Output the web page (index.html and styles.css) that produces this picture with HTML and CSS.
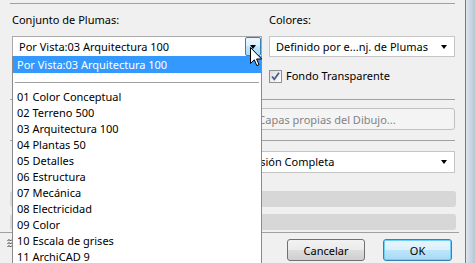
FILE: index.html
```html
<!DOCTYPE html>
<html lang="es">
<head>
  <meta charset="UTF-8" />
  <title>Conjunto de Plumas</title>
  <link rel="stylesheet" href="styles.css">
</head>
<body>
  <div class="screen">
    <div class="dialog">
      <div class="rule rule-top"></div>

      <div class="pens">
        <div class="col">
          <div class="label">Conjunto de Plumas:</div>
          <div class="combo combo-open">
            <span class="combo-text">Por Vista:03 Arquitectura 100</span>
            <span class="combo-btn"><span class="tri"></span></span>
          </div>
        </div>
        <div class="col">
          <div class="label">Colores:</div>
          <div class="combo">
            <span class="combo-text">Definido por e...nj. de Plumas</span>
            <span class="tri tri-end"></span>
          </div>
          <div class="check">
            <span class="box">
              <svg width="13" height="13" viewBox="0 0 13 13">
                <path d="M3 6.5 L5.3 9.3 L10 2.8" fill="none" stroke="#4a5e8c" stroke-width="1.8"/>
              </svg>
            </span>
            Fondo Transparente
          </div>
        </div>
      </div>

      <div class="rule rule-mid"></div>
      <div class="row">
        <div class="btn btn-disabled btn-layers">Capas propias del Dibujo...</div>
      </div>
      <div class="rule rule-mid2"></div>
      <div class="row">
        <div class="combo combo-mode">
          <span class="combo-text">Versión Completa</span>
          <span class="tri tri-end"></span>
        </div>
      </div>
      <div class="bar bar-first"></div>
      <div class="bar bar-second"></div>
      <div class="rule rule-bottom"></div>

      <div class="actions">
        <svg class="grip" width="6" height="11" viewBox="0 0 6 11">
          <path d="M0.5 2 L2 0.5 L3.5 2 L5 0.5 M0.5 5 L2 3.5 L3.5 5 L5 3.5 M0.5 8 L2 6.5 L3.5 8 L5 6.5" fill="none" stroke="#333" stroke-width="1"/>
        </svg>
        <div class="btn btn-cancel">Cancelar</div>
        <div class="btn btn-ok">OK</div>
      </div>

      <!-- open list of the pen set combo -->
      <div class="dropdown">
        <div class="item item-selected">Por Vista:03 Arquitectura 100</div>
        <div class="separator"></div>
        <div class="item">01 Color Conceptual</div>
        <div class="item">02 Terreno 500</div>
        <div class="item">03 Arquitectura 100</div>
        <div class="item">04 Plantas 50</div>
        <div class="item">05 Detalles</div>
        <div class="item">06 Estructura</div>
        <div class="item">07 Mecánica</div>
        <div class="item">08 Electricidad</div>
        <div class="item">09 Color</div>
        <div class="item">10 Escala de grises</div>
        <div class="item">11 ArchiCAD 9</div>
      </div>

      <svg class="cursor" width="13" height="20" viewBox="0 0 13 20">
        <path d="M0.5 0.5 L0.5 16.5 L4.3 12.8 L6.8 18.6 L9 17.7 L6.6 12 L11.6 12 Z" fill="#fff" stroke="#000" stroke-width="1"/>
      </svg>
    </div>
    <div class="frame"></div>
  </div>
</body>
</html>
```

FILE: styles.css
```css
* {
  box-sizing: border-box;
}
body {
  margin: 0;
  font-family: "Noto Sans", "DejaVu Sans", sans-serif;
  font-size: 11px;
  color: #000;
}
.screen {
  display: flex;
  width: 475px;
  height: 263px;
  overflow: hidden;
}
.dialog {
  position: relative;
  flex: 0 0 466px;
  height: 263px;
  padding: 3px 0 0 12px;
  background: #f0f0f0;
  border-right: 1px solid #707d8b;
}
.frame {
  flex: 1;
  background: linear-gradient(90deg, #dde5ee, #b7c6d6);
}

.rule {
  height: 1px;
  background: #a0a0a0;
  margin-left: -2px;
  margin-right: 10px;
}
.rule-mid {
  margin-top: 15px;
}
.rule-mid2 {
  margin-top: 10px;
}
.rule-bottom {
  margin-top: 2px;
  margin-left: -12px;
  margin-right: 6px;
}

.pens {
  display: grid;
  grid-template-columns: 250px 186px;
  column-gap: 7px;
  margin-top: 8px;
}
.label {
  height: 16px;
  line-height: 16px;
  margin-bottom: 8px;
}

.combo {
  position: relative;
  display: flex;
  align-items: center;
  height: 21px;
  padding-left: 6px;
  background: #fff;
  border: 1px solid #c5c5c5;
  white-space: nowrap;
}
.combo-open {
  border-color: #a9a9a9;
}
.combo-text {
  flex: 1;
  line-height: 16px;
}
.combo-btn {
  display: flex;
  align-items: center;
  justify-content: center;
  width: 16px;
  height: 19px;
  border: 1px solid #3c7fb1;
  border-radius: 2px;
  background: linear-gradient(#eaf6fd, #d9f0fc 50%, #bee6fd 50%, #a7d9f5);
}
.tri {
  width: 0;
  height: 0;
  border-left: 3.5px solid transparent;
  border-right: 3.5px solid transparent;
  border-top: 4px solid #000;
}
.tri-end {
  margin-right: 7px;
}

.check {
  display: flex;
  align-items: center;
  gap: 4px;
  height: 16px;
  margin-top: 11px;
  line-height: 16px;
}
.box {
  width: 13px;
  height: 13px;
  border: 1px solid #8e8f8f;
  background: linear-gradient(135deg, #dcdcdc, #fff);
}
.box svg {
  display: block;
  margin: -1px;
}

.row {
  display: flex;
  justify-content: flex-end;
  margin-right: 10px;
}
.btn {
  display: flex;
  align-items: center;
  justify-content: center;
  height: 22px;
  border: 1px solid #707070;
  border-radius: 3px;
  background: linear-gradient(#f2f2f2, #ebebeb 50%, #dddddd 50%, #cfcfcf);
}
.btn-layers {
  width: 256px;
  margin-top: 8px;
}
.btn-disabled {
  color: #838383;
  background: #f4f4f4;
  border-color: #c0c0c0;
}
.combo-mode {
  width: 219px;
  height: 22px;
  margin-top: 10px;
}

.bar {
  height: 16px;
  margin-left: -2px;
  margin-right: 9px;
  border-radius: 3px;
  background: #d7d7d7;
}
.bar-first {
  margin-top: 18px;
}
.bar-second {
  margin-top: 7px;
}

.actions {
  display: flex;
  gap: 18px;
  margin-top: 6px;
  margin-right: 13px;
}
.grip {
  margin: 0 auto 0 -5px;
}
.btn-cancel {
  width: 78px;
}
.btn-ok {
  width: 69px;
  border-color: #3c7fb1;
  box-shadow: inset 0 0 0 1px #6ed0f7;
  background: linear-gradient(#eaf6fd, #d9f0fc 50%, #bee6fd 50%, #a7d9f5);
}

.dropdown {
  position: absolute;
  left: 12px;
  top: 56px;
  width: 250px;
  height: 220px;
  background: #fff;
  border: 1px solid #8a8a8a;
  border-top: none;
}
.item {
  height: 16px;
  line-height: 16px;
  padding-left: 4px;
  white-space: nowrap;
}
.item-selected {
  color: #fff;
  background: #3399ff;
  height: 17px;
  line-height: 17px;
}
.separator {
  height: 1px;
  margin: 9px 2px 6px 2px;
  background: #a0a0a0;
}
.cursor {
  position: absolute;
  left: 250px;
  top: 47px;
}
```
